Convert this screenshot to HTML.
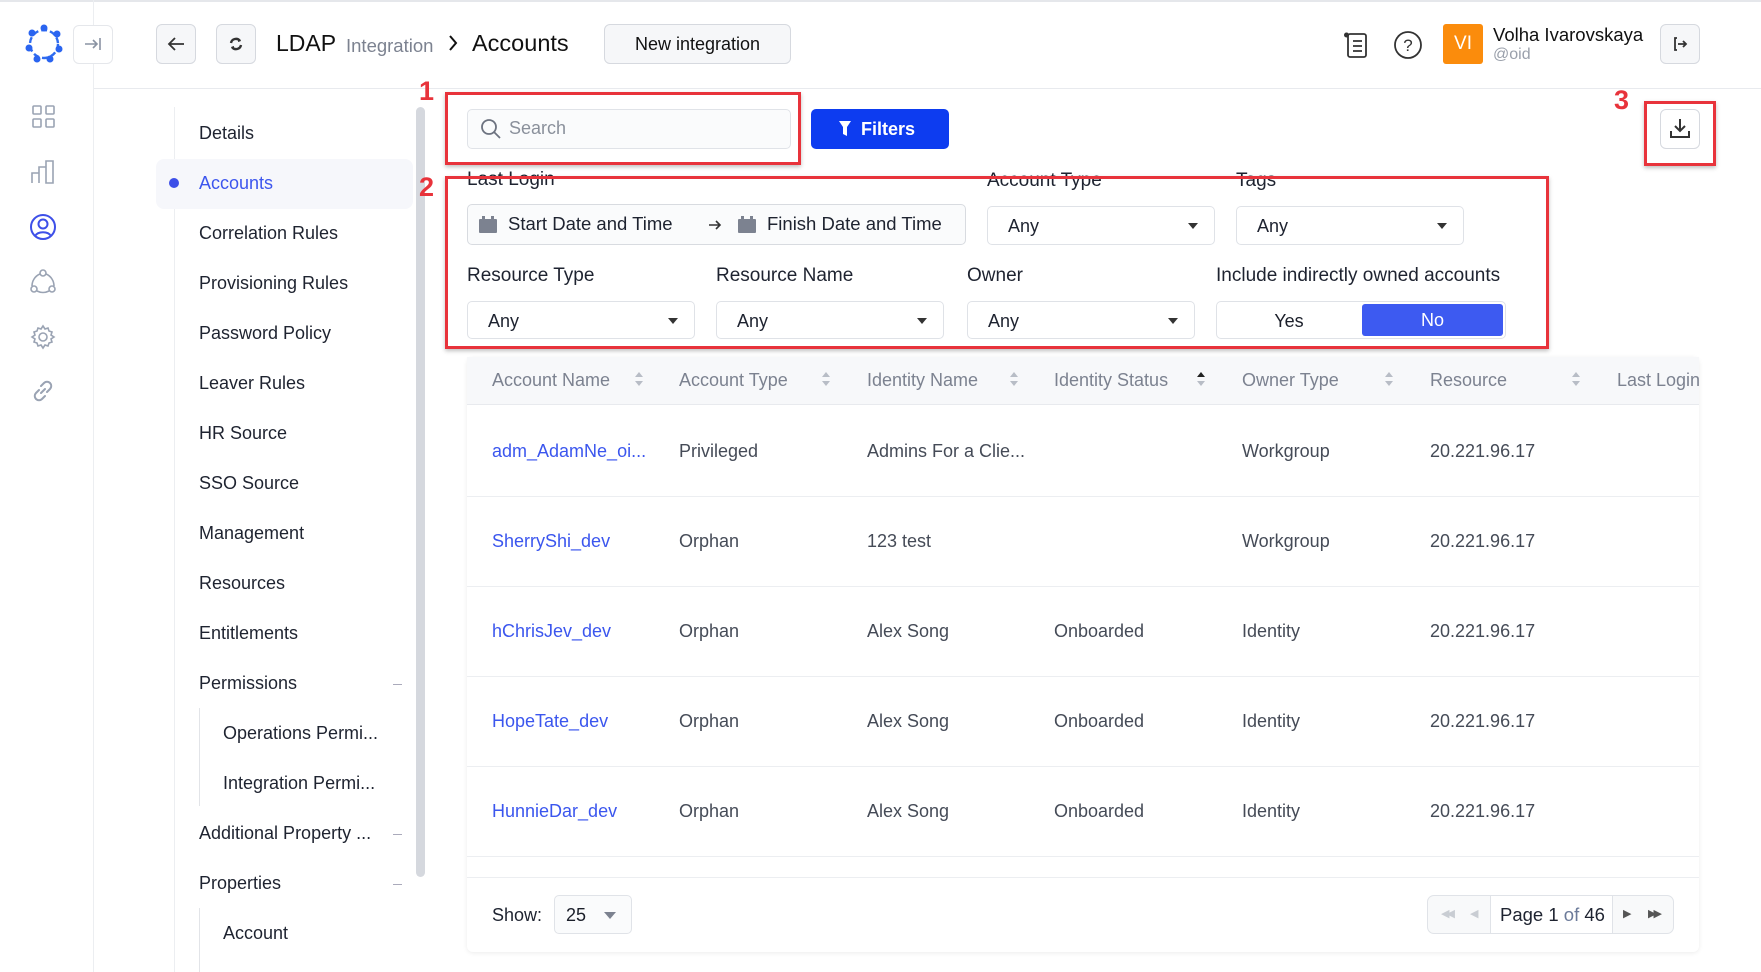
<!DOCTYPE html>
<html><head><meta charset="utf-8"><style>
*{box-sizing:border-box;margin:0;padding:0}
body{width:1761px;height:972px;background:#fff;font-family:"Liberation Sans",sans-serif;color:#1b1f2a;position:relative;overflow:hidden}
.a{position:absolute}
.btn{position:absolute;border:1px solid #d6d9df;border-radius:6px;background:#f6f7f9}
.nav{position:absolute;left:199px;font-size:18px;color:#1e2330}
.lbl{position:absolute;font-size:19px;color:#1e2330}
.sel{position:absolute;border:1px solid #dfe2e7;border-radius:5px;background:#fff;height:38px;font-size:18px;color:#1e2330;padding:9px 0 0 20px}
.sel:after{content:"";position:absolute;right:16px;top:16px;border:5px solid transparent;border-top:6px solid #333;border-bottom:0}
.red{position:absolute;border:3px solid #e8333b;box-shadow:0 2px 4px rgba(0,0,0,.25)}
.num{position:absolute;color:#e8333b;font-weight:bold;font-size:27px}
.th{position:absolute;top:370px;font-size:18px;color:#7c8290}
.srt{position:absolute;top:372px;width:8px;height:14px}
.td{position:absolute;font-size:18px;color:#454b57}
.lk{color:#3b56ee}
.hr{position:absolute;left:467px;width:1232px;height:1px;background:#eceef1}
</style></head><body>
<div class="a" style="left:0;top:0;width:1761px;height:2px;background:#e5e7eb"></div>
<div class="a" style="left:93px;top:0;width:1px;height:972px;background:#eceef1"></div>
<div class="a" style="left:94px;top:88px;width:1667px;height:1px;background:#e8eaee"></div>
<svg class="a" style="left:24px;top:23px" width="40" height="42" viewBox="0 0 40 42"><g fill="none" stroke="#2f6cf0" stroke-width="2.4"><circle cx="20" cy="21" r="14" stroke-dasharray="6 3"/></g><g fill="#2a64f0"><circle cx="20" cy="5" r="3.5"/><circle cx="33" cy="11" r="3.5"/><circle cx="35" cy="26" r="3.5"/><circle cx="26" cy="36" r="3.5"/><circle cx="13" cy="36" r="3.5"/><circle cx="5" cy="25" r="3.5"/><circle cx="8" cy="10" r="3.5"/></g></svg>
<div class="btn" style="left:73px;top:25px;width:40px;height:39px;background:#fff;border-color:#e5e7eb"></div>
<svg class="a" style="left:84px;top:36px" width="18" height="16"><path d="M1 8h12M9 4l4 4-4 4M16 2v12" stroke="#8a93a3" stroke-width="1.6" fill="none"/></svg>
<svg class="a" style="left:31px;top:104px" width="26" height="26"><g fill="none" stroke="#9aa3b3" stroke-width="1.6"><rect x="2" y="2" width="8" height="8" rx="1"/><rect x="15" y="2" width="8" height="8" rx="1"/><rect x="2" y="15" width="8" height="8" rx="1"/><rect x="15" y="15" width="8" height="8" rx="1"/></g></svg>
<svg class="a" style="left:30px;top:159px" width="26" height="26"><path d="M2 24V14h7v10M9 24V8h7v16M16 24V2h7v22z" fill="none" stroke="#9aa3b3" stroke-width="1.6"/></svg>
<svg class="a" style="left:29px;top:213px" width="28" height="28"><g fill="none" stroke="#3d4fe8" stroke-width="2"><circle cx="14" cy="14" r="12"/><circle cx="14" cy="11" r="4.5"/><path d="M6 23c3-5 13-5 16 0"/></g></svg>
<svg class="a" style="left:29px;top:268px" width="28" height="28"><g fill="none" stroke="#9aa3b3" stroke-width="1.6"><circle cx="14" cy="5" r="3"/><circle cx="5" cy="21" r="3"/><circle cx="23" cy="21" r="3"/><path d="M11 6C6 8 3 13 3 18M17 6c5 2 8 7 8 12M8 23c4 2 8 2 12 0"/></g></svg>
<svg class="a" style="left:30px;top:324px" width="26" height="26"><g fill="none" stroke="#9aa3b3" stroke-width="1.6"><circle cx="13" cy="13" r="4"/><path d="M13 2l2 3 3-1 1 3 3 1-1 3 3 2-3 2 1 3-3 1-1 3-3-1-2 3-2-3-3 1-1-3-3-1 1-3-3-2 3-2-1-3 3-1 1-3 3 1z"/></g></svg>
<svg class="a" style="left:31px;top:379px" width="24" height="24"><g fill="none" stroke="#9aa3b3" stroke-width="2" stroke-linecap="round"><path d="M10 14l4-4M8 11l-3 3a4 4 0 006 6l3-3M16 13l3-3a4 4 0 00-6-6l-3 3"/></g></svg>
<div class="btn" style="left:156px;top:24px;width:40px;height:40px"></div>
<svg class="a" style="left:166px;top:35px" width="20" height="18"><path d="M18 9H3M9 3L3 9l6 6" stroke="#333" stroke-width="1.8" fill="none"/></svg>
<div class="btn" style="left:216px;top:24px;width:40px;height:40px"></div>
<svg class="a" style="left:227px;top:35px" width="18" height="18"><path d="M4 8a5 5 0 019-2M14 10a5 5 0 01-9 2" stroke="#333" stroke-width="2.4" fill="none"/><path d="M11 3l3 3-3 1zM7 15l-3-3 3-1z" fill="#333"/></svg>
<div class="a" style="left:276px;top:30px;font-size:23px;color:#111">LDAP</div>
<div class="a" style="left:346px;top:35px;font-size:18.5px;color:#7c8290">Integration</div>
<svg class="a" style="left:447px;top:34px" width="12" height="18"><path d="M3 2l6 7-6 7" stroke="#111" stroke-width="2" fill="none"/></svg>
<div class="a" style="left:472px;top:30px;font-size:23.5px;color:#111">Accounts</div>
<div class="btn" style="left:604px;top:24px;width:187px;height:40px;font-size:18px;color:#111;text-align:center;line-height:38px">New integration</div>
<svg class="a" style="left:1343px;top:31px" width="26" height="28"><g fill="none" stroke="#333" stroke-width="1.8"><rect x="5" y="3" width="18" height="23" rx="2"/><path d="M10 10h9M10 15h9M10 20h9"/></g><circle cx="3.5" cy="4" r="2.5" fill="#333"/></svg>
<svg class="a" style="left:1393px;top:30px" width="30" height="30"><circle cx="15" cy="15" r="13" fill="none" stroke="#333" stroke-width="1.8"/><text x="15" y="21" font-family="Liberation Sans" font-size="17" text-anchor="middle" fill="#333">?</text></svg>
<div class="a" style="left:1443px;top:24px;width:40px;height:40px;background:#fb8c0c;border-radius:3px;color:#fff;font-size:19px;text-align:center;line-height:40px">VI</div>
<div class="a" style="left:1493px;top:24px;font-size:18.5px;color:#111">Volha Ivarovskaya</div>
<div class="a" style="left:1493px;top:46px;font-size:16px;color:#9aa0ab">@oid</div>
<div class="btn" style="left:1660px;top:24px;width:40px;height:40px"></div>
<svg class="a" style="left:1671px;top:35px" width="18" height="18"><path d="M6 3H4v12h2M7 9h8M12 6l3 3-3 3" stroke="#333" stroke-width="1.8" fill="none"/></svg>
<div class="a" style="left:174px;top:107px;width:1px;height:865px;background:#eceef1"></div>
<div class="a" style="left:156px;top:159px;width:257px;height:50px;background:#f6f7fb;border-radius:8px"></div>
<div class="a" style="left:169px;top:178px;width:10px;height:10px;border-radius:50%;background:#3d4fe8"></div>
<div class="a" style="left:416px;top:107px;width:9px;height:770px;background:#d5d8de;border-radius:5px"></div>
<div class="nav" style="top:123px">Details</div>
<div class="nav" style="top:173px;color:#3d56ee">Accounts</div>
<div class="nav" style="top:223px">Correlation Rules</div>
<div class="nav" style="top:273px">Provisioning Rules</div>
<div class="nav" style="top:323px">Password Policy</div>
<div class="nav" style="top:373px">Leaver Rules</div>
<div class="nav" style="top:423px">HR Source</div>
<div class="nav" style="top:473px">SSO Source</div>
<div class="nav" style="top:523px">Management</div>
<div class="nav" style="top:573px">Resources</div>
<div class="nav" style="top:623px">Entitlements</div>
<div class="nav" style="top:673px">Permissions</div>
<div class="a" style="left:199px;top:708px;width:1px;height:98px;background:#e2e4e8"></div>
<div class="nav" style="left:223px;top:723px">Operations Permi...</div>
<div class="nav" style="left:223px;top:773px">Integration Permi...</div>
<div class="nav" style="top:823px">Additional Property ...</div>
<div class="nav" style="top:873px">Properties</div>
<div class="a" style="left:199px;top:908px;width:1px;height:64px;background:#e2e4e8"></div>
<div class="nav" style="left:223px;top:923px">Account</div>
<div class="a" style="left:393px;top:684px;width:9px;height:1px;background:#aab"></div>
<div class="a" style="left:393px;top:834px;width:9px;height:1px;background:#aab"></div>
<div class="a" style="left:393px;top:884px;width:9px;height:1px;background:#aab"></div>
<div class="a" style="left:467px;top:109px;width:324px;height:40px;border:1px solid #e0e3e8;border-radius:5px;background:#fafbfc"></div>
<svg class="a" style="left:480px;top:118px" width="22" height="22"><circle cx="9" cy="9" r="7" fill="none" stroke="#6d7380" stroke-width="1.8"/><path d="M14 14l6 6" stroke="#6d7380" stroke-width="1.8"/></svg>
<div class="a" style="left:509px;top:118px;font-size:18px;color:#8a909b">Search</div>
<div class="a" style="left:811px;top:109px;width:138px;height:40px;background:#0d3cf0;border-radius:5px;color:#fff;font-size:18px;font-weight:bold;line-height:40px;padding-left:50px">Filters</div>
<svg class="a" style="left:838px;top:120px" width="14" height="17"><path d="M1 1h12l-4 6v9l-4-2V7z" fill="#fff"/></svg>
<div class="btn" style="left:1660px;top:109px;width:40px;height:40px;background:#fff"></div>
<svg class="a" style="left:1669px;top:117px" width="22" height="22"><path d="M11 2v12M6 9l5 5 5-5M2 14v6h18v-6" stroke="#333" stroke-width="2" fill="none"/></svg>
<div class="lbl" style="left:467px;top:169px">Last Login</div>
<div class="lbl" style="left:987px;top:170px">Account Type</div>
<div class="lbl" style="left:1236px;top:170px">Tags</div>
<div class="a" style="left:467px;top:204px;width:499px;height:41px;border:1px solid #d8dbe0;border-radius:5px;background:#fafbfc"></div>
<svg class="a" style="left:478px;top:216px" width="20" height="18"><rect x="1" y="3" width="18" height="14" rx="1" fill="#7c8290"/><rect x="4" y="0" width="3" height="5" fill="#7c8290"/><rect x="13" y="0" width="3" height="5" fill="#7c8290"/></svg>
<div class="a" style="left:508px;top:213px;font-size:18.5px;color:#1e2330">Start Date and Time</div>
<svg class="a" style="left:708px;top:219px" width="14" height="12"><path d="M1 6h11M8 2l4 4-4 4" stroke="#333" stroke-width="1.6" fill="none"/></svg>
<svg class="a" style="left:737px;top:216px" width="20" height="18"><rect x="1" y="3" width="18" height="14" rx="1" fill="#7c8290"/><rect x="4" y="0" width="3" height="5" fill="#7c8290"/><rect x="13" y="0" width="3" height="5" fill="#7c8290"/></svg>
<div class="a" style="left:767px;top:213px;font-size:18.5px;color:#1e2330">Finish Date and Time</div>
<div class="sel" style="left:987px;top:206px;width:228px;height:39px">Any</div>
<div class="sel" style="left:1236px;top:206px;width:228px;height:39px">Any</div>
<div class="lbl" style="left:467px;top:265px">Resource Type</div>
<div class="lbl" style="left:716px;top:265px">Resource Name</div>
<div class="lbl" style="left:967px;top:265px">Owner</div>
<div class="lbl" style="left:1216px;top:265px">Include indirectly owned accounts</div>
<div class="sel" style="left:467px;top:301px;width:228px">Any</div>
<div class="sel" style="left:716px;top:301px;width:228px">Any</div>
<div class="sel" style="left:967px;top:301px;width:228px">Any</div>
<div class="a" style="left:1216px;top:301px;width:290px;height:38px;border:1px solid #dfe2e7;border-radius:5px"></div>
<div class="a" style="left:1216px;top:311px;width:146px;text-align:center;font-size:18px">Yes</div>
<div class="a" style="left:1362px;top:304px;width:141px;height:32px;background:#3d5af1;border-radius:3px;color:#fff;font-size:18px;text-align:center;line-height:32px">No</div>
<div class="red" style="left:445px;top:92px;width:356px;height:73px"></div>
<div class="num" style="left:419px;top:76px">1</div>
<div class="red" style="left:445px;top:176px;width:1104px;height:173px"></div>
<div class="num" style="left:419px;top:172px">2</div>
<div class="red" style="left:1644px;top:101px;width:72px;height:65px"></div>
<div class="num" style="left:1614px;top:85px">3</div>
<div class="a" style="left:467px;top:357px;width:1232px;height:595px;border-radius:6px;box-shadow:0 1px 5px rgba(0,0,0,.08)"></div>
<div class="a" style="left:467px;top:357px;width:1232px;height:48px;background:#f7f8fa;border-bottom:1px solid #e8eaee"></div>
<div class="th" style="left:492px">Account Name</div>
<div class="th" style="left:679px">Account Type</div>
<div class="th" style="left:867px">Identity Name</div>
<div class="th" style="left:1054px">Identity Status</div>
<div class="th" style="left:1242px">Owner Type</div>
<div class="th" style="left:1430px">Resource</div>
<div class="th" style="left:1617px;width:82px;overflow:hidden;white-space:nowrap">Last Login</div>
<svg class="srt" style="left:635px"><path d="M0 5l4-5 4 5zM0 9l4 5 4-5z" fill="#b8bdc6"/></svg>
<svg class="srt" style="left:822px"><path d="M0 5l4-5 4 5zM0 9l4 5 4-5z" fill="#b8bdc6"/></svg>
<svg class="srt" style="left:1010px"><path d="M0 5l4-5 4 5zM0 9l4 5 4-5z" fill="#b8bdc6"/></svg>
<svg class="srt" style="left:1197px"><path d="M0 5l4-5 4 5z" fill="#222"/><path d="M0 9l4 5 4-5z" fill="#b8bdc6"/></svg>
<svg class="srt" style="left:1385px"><path d="M0 5l4-5 4 5zM0 9l4 5 4-5z" fill="#b8bdc6"/></svg>
<svg class="srt" style="left:1572px"><path d="M0 5l4-5 4 5zM0 9l4 5 4-5z" fill="#b8bdc6"/></svg>
<div class="hr" style="top:496px"></div><div class="hr" style="top:586px"></div><div class="hr" style="top:676px"></div><div class="hr" style="top:766px"></div><div class="hr" style="top:856px"></div><div class="hr" style="top:877px"></div>
<div class="td lk" style="left:492px;top:441px">adm_AdamNe_oi...</div><div class="td" style="left:679px;top:441px">Privileged</div><div class="td" style="left:867px;top:441px">Admins For a Clie...</div><div class="td" style="left:1242px;top:441px">Workgroup</div><div class="td" style="left:1430px;top:441px">20.221.96.17</div>
<div class="td lk" style="left:492px;top:531px">SherryShi_dev</div><div class="td" style="left:679px;top:531px">Orphan</div><div class="td" style="left:867px;top:531px">123 test</div><div class="td" style="left:1242px;top:531px">Workgroup</div><div class="td" style="left:1430px;top:531px">20.221.96.17</div>
<div class="td lk" style="left:492px;top:621px">hChrisJev_dev</div><div class="td" style="left:679px;top:621px">Orphan</div><div class="td" style="left:867px;top:621px">Alex Song</div><div class="td" style="left:1054px;top:621px">Onboarded</div><div class="td" style="left:1242px;top:621px">Identity</div><div class="td" style="left:1430px;top:621px">20.221.96.17</div>
<div class="td lk" style="left:492px;top:711px">HopeTate_dev</div><div class="td" style="left:679px;top:711px">Orphan</div><div class="td" style="left:867px;top:711px">Alex Song</div><div class="td" style="left:1054px;top:711px">Onboarded</div><div class="td" style="left:1242px;top:711px">Identity</div><div class="td" style="left:1430px;top:711px">20.221.96.17</div>
<div class="td lk" style="left:492px;top:801px">HunnieDar_dev</div><div class="td" style="left:679px;top:801px">Orphan</div><div class="td" style="left:867px;top:801px">Alex Song</div><div class="td" style="left:1054px;top:801px">Onboarded</div><div class="td" style="left:1242px;top:801px">Identity</div><div class="td" style="left:1430px;top:801px">20.221.96.17</div>
<div class="a" style="left:492px;top:905px;font-size:18px;color:#1e2330">Show:</div>
<div class="a" style="left:554px;top:895px;width:78px;height:39px;border:1px solid #e0e3e8;border-radius:5px;background:#fafbfc;font-size:18px;padding:9px 0 0 11px">25</div>
<svg class="a" style="left:604px;top:912px" width="12" height="7"><path d="M0 0h12L6 7z" fill="#7c8290"/></svg>
<div class="a" style="left:1427px;top:895px;width:247px;height:39px;border:1px solid #e0e3e8;border-radius:7px;background:#f8f9fa"></div>
<div class="a" style="left:1490px;top:896px;width:123px;height:37px;background:#fff;border-left:1px solid #e0e3e8;border-right:1px solid #e0e3e8"></div>
<div class="a" style="left:1441px;top:907px;font-size:11px;color:#c9cdd3;letter-spacing:-3px">◀◀</div>
<div class="a" style="left:1470px;top:907px;font-size:11px;color:#c9cdd3">◀</div>
<div class="a" style="left:1500px;top:904px;font-size:18.5px;color:#1e2330">Page 1 <span style="color:#6b7a99">of</span> 46</div>
<div class="a" style="left:1623px;top:907px;font-size:11px;color:#555">▶</div>
<div class="a" style="left:1648px;top:907px;font-size:11px;color:#555;letter-spacing:-3px">▶▶</div>
</body></html>
